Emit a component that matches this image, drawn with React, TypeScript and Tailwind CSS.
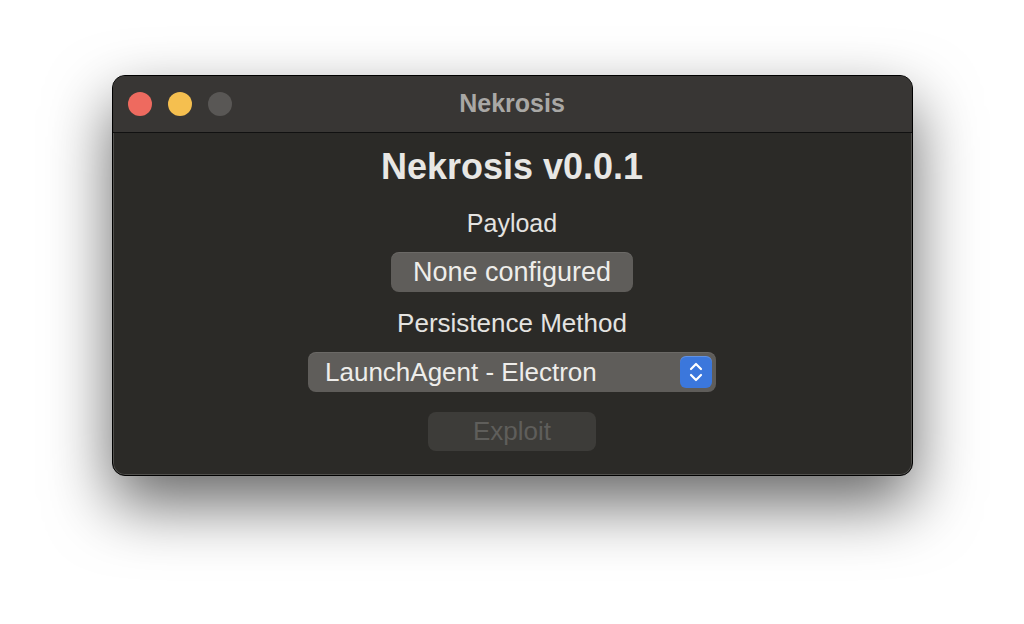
import React from 'react';

function Stepper() {
    return (
        <div className="flex justify-center items-center w-8 h-8 rounded-[6px] bg-[#3b77dc] shadow-[inset_0_1px_0_rgba(255,255,255,0.2)]">
            <svg width="16" height="22" viewBox="0 0 16 22" fill="none" stroke="white" strokeWidth="2.2" strokeLinecap="round" strokeLinejoin="round">
                <path d="M3 8 L8 3 L13 8" />
                <path d="M3 14 L8 19 L13 14" />
            </svg>
        </div>
    );
}

export default function App() {
    return (
        <div className="flex justify-center pt-[75px] w-full h-[624px] bg-white" style={{ fontFamily: '"Liberation Sans", Arial, sans-serif' }}>
            <div className="flex flex-col w-[801px] h-[401px] rounded-[13px] overflow-hidden border border-black bg-[#2b2a27] shadow-[0_28px_64px_rgba(0,0,0,0.6),inset_0_0_0_1px_rgba(255,255,255,0.18)]">
                <div className="relative flex items-center h-[57px] bg-[#383634] border-b border-[#111]">
                    <div className="flex gap-4 items-center pl-[15px]">
                        <span className="w-6 h-6 rounded-full bg-[#ee6a5f]" />
                        <span className="w-6 h-6 rounded-full bg-[#f5bf4f]" />
                        <span className="w-6 h-6 rounded-full bg-[#595755]" />
                    </div>
                    <div className="absolute inset-0 flex justify-center items-center text-[25px] font-bold text-[#a9a8a5]">
                        Nekrosis
                    </div>
                </div>

                <div className="flex flex-col items-center pt-[14px]">
                    <h1 className="text-[36px] leading-[40px] font-bold text-[#e8e7e4]">Nekrosis v0.0.1</h1>
                    <div className="mt-[21px] text-[25px] leading-[30px] text-[#e4e3e0]">Payload</div>
                    <button className="mt-[14px] flex justify-center items-center w-[242px] h-10 rounded-[8px] bg-[#5f5d5a] text-[27px] text-[#eeedea] shadow-[inset_0_1px_0_rgba(255,255,255,0.08)]">
                        None configured
                    </button>
                    <div className="mt-[16px] text-[26px] leading-[30px] text-[#e4e3e0]">Persistence Method</div>
                    <div className="mt-[14px] flex justify-between items-center w-[408px] h-10 pl-[17px] pr-[4px] rounded-[8px] bg-[#5f5d5a] shadow-[inset_0_1px_0_rgba(255,255,255,0.08)]">
                        <span className="text-[26px] text-[#eeedea]">LaunchAgent - Electron</span>
                        <Stepper />
                    </div>
                    <button className="mt-[20px] flex justify-center items-center w-[168px] h-[39px] rounded-[8px] bg-[#3d3c39] text-[26px] text-[#5f5e5b]">
                        Exploit
                    </button>
                </div>
            </div>
        </div>
    );
}
